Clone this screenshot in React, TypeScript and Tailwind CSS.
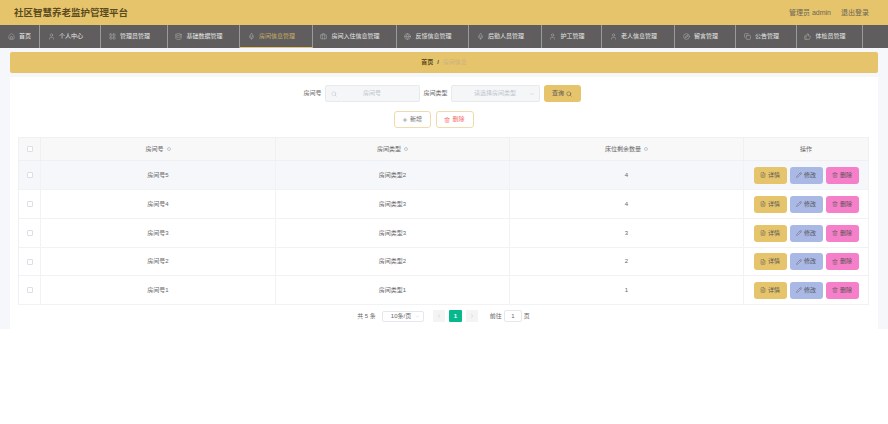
import { ChevronDown, ChevronLeft, ChevronRight, Search, Plus, Trash2, Home, User, LayoutGrid, Database, Mic, Briefcase, Globe, Compass, Copy, ThumbsUp, FileText, Pencil } from "lucide-react";

const font = { fontFamily: '"Liberation Sans", "Noto Sans CJK SC", sans-serif' };

const navItems = [
  { label: "首页", icon: Home, w: "w-[40px]" },
  { label: "个人中心", icon: User, w: "w-[61px]", arrow: true },
  { label: "管理员管理", icon: LayoutGrid, w: "w-[67px]", arrow: true },
  { label: "基础数据管理", icon: Database, w: "w-[72px]", arrow: true },
  { label: "房间信息管理", icon: Mic, w: "w-[73px]", arrow: true, active: true },
  { label: "房间入住信息管理", icon: Briefcase, w: "w-[84px]", arrow: true },
  { label: "反馈信息管理", icon: Globe, w: "w-[72px]", arrow: true },
  { label: "后勤人员管理", icon: Mic, w: "w-[73px]", arrow: true },
  { label: "护工管理", icon: User, w: "w-[60px]", arrow: true },
  { label: "老人信息管理", icon: User, w: "w-[73px]", arrow: true },
  { label: "留言管理", icon: Compass, w: "w-[61px]", arrow: true },
  { label: "公告管理", icon: Copy, w: "w-[61px]", arrow: true },
  { label: "体检员管理", icon: ThumbsUp, w: "w-[66px]", arrow: true },
];

const rows = [
  { name: "房间号5", type: "房间类型2", beds: 4, h: "h-[29px]", bg: "bg-[#f5f7fa]" },
  { name: "房间号4", type: "房间类型3", beds: 4, h: "h-[29px]", bg: "bg-white" },
  { name: "房间号3", type: "房间类型3", beds: 3, h: "h-[29px]", bg: "bg-white" },
  { name: "房间号2", type: "房间类型2", beds: 2, h: "h-[28px]", bg: "bg-white" },
  { name: "房间号1", type: "房间类型1", beds: 1, h: "h-[29px]", bg: "bg-white" },
];

function SortMark() {
  return <span className="ml-[3px] inline-block h-[4px] w-[4px] rounded-full border border-[#c4c7cc]" />;
}

function RowButton({ label, icon: Icon, color }: { label: string; icon: typeof Plus; color: string }) {
  return (
    <div className={`flex h-[17px] w-[33px] items-center justify-center gap-[2px] rounded-[3px] text-[6px] text-[#555] ${color}`}>
      <Icon size={6} strokeWidth={1.5} />
      {label}
    </div>
  );
}

export default function App() {
  return (
    <div style={font} className="min-h-[424px] bg-white">
      <header className="flex h-[25px] items-center justify-between bg-[#e6c46c] pl-[14px] pr-[19px] pt-[1px]">
        <div className="text-[9.5px] font-bold text-[#5a4a1e]">社区智慧养老监护管理平台</div>
        <div className="flex gap-[10px] text-[7px] text-[#6a6556]">
          <span>管理员 admin</span>
          <span>退出登录</span>
        </div>
      </header>

      <nav className="flex h-[23px] bg-[#5f5d5d]">
        {navItems.map((item) => (
          <div
            key={item.label}
            className={`flex shrink-0 items-center justify-center gap-[4px] border-r border-[#9a9a9a] text-[6px] ${item.w} ${
              item.active ? "border-b border-b-[#e6c46c] text-[#c9ad66]" : "text-[#e8e8e8]"
            }`}
          >
            <item.icon size={7} className="text-[#a8a8a8]" />
            <span className="whitespace-nowrap">{item.label}</span>
            {item.arrow && <ChevronDown size={5} className="text-[#a0407a]" />}
          </div>
        ))}
      </nav>

      <main className="h-[281px] bg-[#f5f7fa] px-[10px] pt-[4px]">
        <div className="flex h-[21px] items-center justify-center gap-[4px] rounded-[2px] bg-[#e6c46c] text-[6px]">
          <span className="font-bold text-[#5a4a1e]">首页</span>
          <span className="font-bold text-[#444]">/</span>
          <span className="text-[#c9b37c]">房间信息</span>
        </div>

        <section className="mt-[4px] h-[252px] bg-white pl-[8px] pr-[9px] pt-[8px]">
          <div className="flex h-[17px] items-center justify-center pr-[3px] text-[6px] text-[#666]">
            <span className="mr-[3px]">房间号</span>
            <div className="relative mr-[4px] flex h-[17px] w-[95px] items-center justify-center rounded-[2px] border border-[#e8e9ec] bg-[#f5f6f8] text-[#c0c4cc]">
              <Search size={6} className="absolute left-[5px]" />
              房间号
            </div>
            <span className="mr-[3px]">房间类型</span>
            <div className="relative mr-[4px] flex h-[17px] w-[89px] items-center justify-center rounded-[2px] border border-[#e8e9ec] bg-[#f5f6f8] text-[#c0c4cc]">
              请选择房间类型
              <ChevronDown size={6} className="absolute right-[4px]" />
            </div>
            <div className="flex h-[17px] w-[37px] items-center justify-center gap-[2px] rounded-[3px] bg-[#e6c46c] text-[#555]">
              查询 <Search size={6} />
            </div>
          </div>

          <div className="mt-[9px] flex justify-center gap-[5px] pr-[20px] text-[6px]">
            <div className="flex h-[17px] w-[37px] items-center justify-center gap-[2px] rounded-[3px] border border-[#efdcae] text-[#666]">
              <Plus size={6} />
              新增
            </div>
            <div className="flex h-[17px] w-[38px] items-center justify-center gap-[2px] rounded-[3px] border border-[#efdcae] text-[#f56c6c]">
              <Trash2 size={6} />
              删除
            </div>
          </div>

          <div className="mt-[9px] border-l border-t border-[#eff0f3] text-[6px] text-[#666]">
            <div className="flex h-[23px] bg-[#f8f8f9]">
              <div className="flex w-[22px] items-center justify-center border-b border-r border-[#eff0f3]">
                <span className="h-[6px] w-[6px] rounded-[1px] border border-[#dcdfe6] bg-white" />
              </div>
              <div className="flex w-[235px] items-center justify-center border-b border-r border-[#eff0f3]">
                房间号<SortMark />
              </div>
              <div className="flex w-[234px] items-center justify-center border-b border-r border-[#eff0f3]">
                房间类型<SortMark />
              </div>
              <div className="flex w-[234px] items-center justify-center border-b border-r border-[#eff0f3]">
                床位剩余数量<SortMark />
              </div>
              <div className="flex flex-1 items-center justify-center border-b border-r border-[#eff0f3]">操作</div>
            </div>
            {rows.map((row) => (
              <div key={row.name} className={`flex ${row.h} ${row.bg}`}>
                <div className="flex w-[22px] items-center justify-center border-b border-r border-[#f1f2f4]">
                  <span className="h-[6px] w-[6px] rounded-[1px] border border-[#dcdfe6] bg-white" />
                </div>
                <div className="flex w-[235px] items-center justify-center border-b border-r border-[#f1f2f4]">{row.name}</div>
                <div className="flex w-[234px] items-center justify-center border-b border-r border-[#f1f2f4]">{row.type}</div>
                <div className="flex w-[234px] items-center justify-center border-b border-r border-[#f1f2f4]">{row.beds}</div>
                <div className="flex flex-1 items-center justify-center gap-[3px] border-b border-r border-[#f1f2f4]">
                  <RowButton label="详情" icon={FileText} color="bg-[#e6c46c]" />
                  <RowButton label="修改" icon={Pencil} color="bg-[#aab8e6]" />
                  <RowButton label="删除" icon={Trash2} color="bg-[#f57fc8]" />
                </div>
              </div>
            ))}
          </div>

          <div className="mt-[5px] flex h-[12px] items-center justify-center text-[6px] text-[#666]">
            <span className="mr-[6px]">共 5 条</span>
            <div className="relative mr-[9px] flex h-[11px] w-[42px] items-center rounded-[2px] border border-[#e4e7ed] pl-[8px]">
              10条/页
              <ChevronDown size={5} className="absolute right-[3px] text-[#c0c4cc]" />
            </div>
            <div className="mr-[4px] flex h-[12px] w-[12px] items-center justify-center rounded-[1px] bg-[#f4f4f5] text-[#c0c4cc]">
              <ChevronLeft size={6} />
            </div>
            <div className="mr-[4px] flex h-[12px] w-[13px] items-center justify-center rounded-[1px] bg-[#05b98c] font-bold text-white">1</div>
            <div className="mr-[12px] flex h-[12px] w-[12px] items-center justify-center rounded-[1px] bg-[#f4f4f5] text-[#c0c4cc]">
              <ChevronRight size={6} />
            </div>
            <span className="mr-[2px]">前往</span>
            <div className="mr-[2px] flex h-[12px] w-[18px] items-center justify-center rounded-[2px] border border-[#e4e7ed]">1</div>
            <span>页</span>
          </div>
        </section>
      </main>
    </div>
  );
}
